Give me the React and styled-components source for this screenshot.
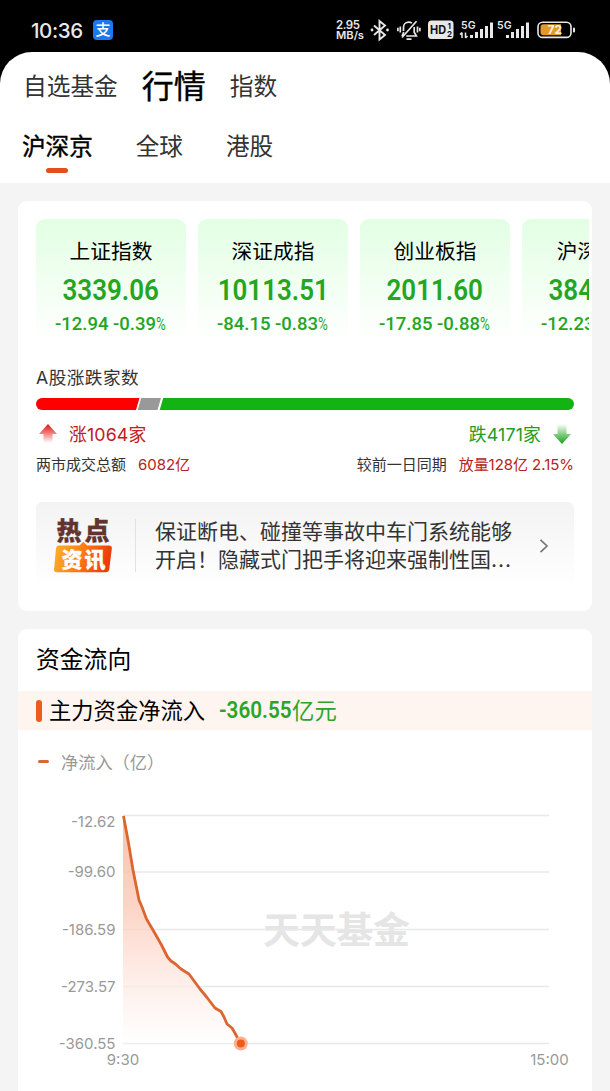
import styled, { createGlobalStyle } from "styled-components";

const indexList = [
  { name: "上证指数", value: "3339.06", change: "-12.94", rate: "-0.39" },
  { name: "深证成指", value: "10113.51", change: "-84.15", rate: "-0.83" },
  { name: "创业板指", value: "2011.60", change: "-17.85", rate: "-0.88" },
  { name: "沪深300", value: "3846.23", change: "-12.23", rate: "-0.32" },
];

const gridLines = [
  { y: 25.5, label: "-12.62" },
  { y: 82, label: "-99.60" },
  { y: 139.5, label: "-186.59" },
  { y: 196.5, label: "-273.57" },
  { y: 253.5, label: "-360.55" },
];

const flowPoints =
  "105.5,26 110.5,53 115,80 121,110 124,117 128.5,129 137,143.5 143.5,155 149.5,167 153,171 157.5,174 163,179 171,184 182,199 189,207.5 197,218 203,221.5 206,227 209,234 214,238 218,245 222.5,253.5";

const StatusIcons = () => {
  return (
    <svg width="242" height="24" viewBox="0 0 242 24" fill="none">
      <g fill="#e8e8e8" fontFamily="Inter, sans-serif" fontWeight="600">
        <text x="0" y="11" fontSize="11.5" textLength="24">2.95</text>
        <text x="0" y="20.5" fontSize="10.5" textLength="28" lengthAdjust="spacingAndGlyphs">MB/s</text>
      </g>
      {/* bluetooth */}
      <path d="M38 7.5l11 9.5-5.500 4.500V3l5.500 4.500-11 9.500" stroke="#e8e8e8" strokeWidth="1.9" />
      <circle cx="36" cy="12" r="1.4" fill="#e8e8e8" />
      <circle cx="51.5" cy="12" r="1.4" fill="#e8e8e8" />
      {/* muted bell */}
      <path
        d="M67.5 13V9.200c0-3 2.300-5 5.300-5 1.200 0 2.200.3 3.100.9M78.200 9v5.200l2.200 3.800H70.200M67.800 14L66 18M66 19.500L80.500 3.200M70.500 21.200h5M64.300 8.500v6M61.900 9.800v3.400M81.500 8.500v6M83.900 9.800v3.400"
        stroke="#e8e8e8"
        strokeWidth="1.7"
      />
      {/* HD */}
      <rect x="92" y="2.5" width="25.5" height="18.5" rx="3.5" fill="#e8e8e8" />
      <g fill="#111" fontFamily="Inter, sans-serif" fontWeight="700">
        <text x="94" y="16.2" fontSize="12" textLength="16" lengthAdjust="spacingAndGlyphs">HD</text>
        <text x="111.5" y="11" fontSize="8">1</text>
        <text x="111" y="19.3" fontSize="8">2</text>
      </g>
      {/* signals */}
      <g fill="#e8e8e8" fontFamily="Inter, sans-serif" fontWeight="600" fontSize="10.5">
        <text x="125" y="10.800" textLength="14.5">5G</text>
        <text x="161" y="10.800" textLength="14.5">5G</text>
      </g>
      <path d="M126 14.500v5.500M124 16.500l2-2M129.500 14.500v5.500M129.500 20l2-2" stroke="#e8e8e8" strokeWidth="1.5" />
      <g fill="#e8e8e8">
        <rect x="134" y="17" width="3" height="3" />
        <rect x="139" y="14" width="3" height="6" />
        <rect x="144" y="11" width="3" height="9" />
        <rect x="149" y="8" width="3" height="12" />
        <rect x="154" y="4.5" width="3" height="15.5" />
        <rect x="170" y="17" width="3" height="3" />
        <rect x="175" y="14" width="3" height="6" />
        <rect x="180" y="11" width="3" height="9" />
        <rect x="185" y="8" width="3" height="12" />
        <rect x="190" y="4.5" width="3" height="15.5" />
      </g>
      {/* battery */}
      <rect x="202" y="4.2" width="33" height="15.2" rx="4.5" stroke="#e8e8e8" strokeWidth="1.6" />
      <path d="M207.500 6.300H225v11h-17.500a3 3 0 01-3-3v-5a3 3 0 013-3z" fill="#e09a28" />
      <rect x="237" y="9.5" width="2" height="5" rx="1" fill="#e8e8e8" />
      <text x="211.5" y="16" fontSize="12" fontWeight="700" fill="#fbf3e4" fontFamily="Inter, sans-serif" textLength="14.5" lengthAdjust="spacingAndGlyphs">
        72
      </text>
    </svg>
  );
};

const FlowChart = () => {
  return (
    <svg width="574" height="301" viewBox="0 0 574 301">
      <defs>
        <linearGradient id="flowArea" x1="0" y1="0" x2="0" y2="1">
          <stop offset="0" stopColor="#f8b49a" stopOpacity="0.85" />
          <stop offset="0.4" stopColor="#fbcab8" stopOpacity="0.8" />
          <stop offset="1" stopColor="#fff" stopOpacity="0.6" />
        </linearGradient>
      </defs>
      <ChartMark x="245" y="154" textLength="147">
        天天基金
      </ChartMark>
      {gridLines.map((line) => (
        <g key={line.label}>
          <line x1="105" x2="531" y1={line.y} y2={line.y} stroke="#e8e8e8" strokeWidth="1.3" />
          <AxisText x="97.5" y={line.label === "-12.62" ? 37 : line.y + 5.2} textAnchor="end">
            {line.label}
          </AxisText>
        </g>
      ))}
      <polygon points={`105,253.5 105,26 ${flowPoints}`} fill="url(#flowArea)" />
      <polyline points={flowPoints} fill="none" stroke="#dc6530" strokeWidth="2.8" strokeLinejoin="round" />
      <circle cx="222.8" cy="253.5" r="7" fill="#fbb092" />
      <circle cx="222.8" cy="253.5" r="4" fill="#f15a1d" />
      <AxisText x="105" y="275" textAnchor="middle">
        9:30
      </AxisText>
      <AxisText x="531.5" y="275" textAnchor="middle">
        15:00
      </AxisText>
    </svg>
  );
};

const NewsBadge = () => {
  return (
    <svg width="58" height="58" viewBox="0 0 58 58">
      <defs>
        <linearGradient id="badgeFill" x1="0" y1="0" x2="1" y2="0.2">
          <stop offset="0" stopColor="#fdb52d" />
          <stop offset="0.55" stopColor="#fb7a17" />
          <stop offset="1" stopColor="#ee3d0b" />
        </linearGradient>
      </defs>
      <BadgeText x="2.5" y="22.5" textLength="53" fill="#633330" stroke="#633330" fontSize="25">
        热点
      </BadgeText>
      <path
        d="M5 28.500h20.500l3.800-3.800 3.800 3.800H55q3.200 0 2.800 3.200l-2.500 20.500q-.5 3-3.500 3H2.800q-3.200 0-2.700-3.200L2 31.500q.4-3 3-3z"
        fill="url(#badgeFill)"
      />
      <BadgeText x="7.5" y="49.5" textLength="44" fill="#fff" stroke="#fff" fontSize="21">
        资讯
      </BadgeText>
    </svg>
  );
};

const App = () => {
  return (
    <>
      <GlobalStyle />
      <StPage>
        <StStatusBar>
          <StClock>10:36</StClock>
          <StPayIcon>支</StPayIcon>
          <StatusIcons />
        </StStatusBar>

        <StHeader>
          <StMainNav>
            <NavItem>自选基金</NavItem>
            <NavItem $active>行情</NavItem>
            <NavItem>指数</NavItem>
          </StMainNav>
          <StTabs>
            <Tab $active>沪深京</Tab>
            <Tab>全球</Tab>
            <Tab>港股</Tab>
          </StTabs>
        </StHeader>

        <StContent>
          <MarketCard>
            <IndexRow>
              {indexList.map((item) => (
                <IndexTile key={item.name}>
                  <IndexName>{item.name}</IndexName>
                  <IndexValue>{item.value}</IndexValue>
                  <IndexChange>
                    {item.change} {item.rate}
                    <Percent>%</Percent>
                  </IndexChange>
                </IndexTile>
              ))}
            </IndexRow>

            <BreadthTitle>A股涨跌家数</BreadthTitle>
            <svg width="538" height="12" viewBox="0 0 538 12">
              <path d="M6 0h97.500l-3.500 12H6A6 6 0 016 0z" fill="#fe0000" />
              <path d="M105.200 0h19.800l-3.500 12h-19.800z" fill="#999" />
              <path d="M127.200 0H532a6 6 0 010 12H123.700z" fill="#14b314" />
            </svg>
            <CountRow>
              <CountText $color="#c02020">
                <svg width="18" height="20" viewBox="0 0 18 20">
                  <defs>
                    <linearGradient id="upArrow" x1="0" y1="0" x2="0" y2="1">
                      <stop offset="0" stopColor="#d81515" />
                      <stop offset="0.5" stopColor="#f58080" />
                      <stop offset="1" stopColor="#fff" />
                    </linearGradient>
                  </defs>
                  <path d="M9 0l9 10h-4.500v9h-9v-9H0z" fill="url(#upArrow)" />
                </svg>
                涨1064家
              </CountText>
              <CountText $color="#249c24">
                跌4171家
                <svg width="18" height="20" viewBox="0 0 18 20">
                  <defs>
                    <linearGradient id="downArrow" x1="0" y1="0" x2="0" y2="1">
                      <stop offset="0" stopColor="#fff" />
                      <stop offset="0.5" stopColor="#84cf84" />
                      <stop offset="1" stopColor="#18a018" />
                    </linearGradient>
                  </defs>
                  <path d="M4.500 0h9v10H18l-9 10-9-10h4.500z" fill="url(#downArrow)" />
                </svg>
              </CountText>
            </CountRow>
            <TurnoverRow>
              <span>
                两市成交总额<Turnover>6082亿</Turnover>
              </span>
              <span>
                较前一日同期<Turnover>放量128亿 2.15%</Turnover>
              </span>
            </TurnoverRow>

            <NewsBox>
              <NewsBadge />
              <NewsDivider />
              <NewsText>
                保证断电、碰撞等事故中车门系统能够
                <br />
                开启！隐藏式门把手将迎来强制性国<Dots>...</Dots>
              </NewsText>
              <svg width="10" height="16" viewBox="0 0 10 16" fill="none">
                <path d="M1.500 1.800L8 8l-6.500 6.200" stroke="#777" strokeWidth="1.7" />
              </svg>
            </NewsBox>
          </MarketCard>

          <FlowCard>
            <FlowTitle>资金流向</FlowTitle>
            <FlowSummary>
              <FlowMark />
              主力资金净流入
              <FlowValue>-360.55</FlowValue>
              <FlowUnit>亿元</FlowUnit>
            </FlowSummary>
            <Legend>
              <LegendDash />
              净流入（亿）
            </Legend>
            <FlowChart />
          </FlowCard>
        </StContent>
      </StPage>
    </>
  );
};

export default App;

const GlobalStyle = createGlobalStyle`
  * {
    box-sizing: border-box;
  }

  body {
    margin: 0;
    background: #000;
    font-family: Inter, "Noto Sans CJK SC", sans-serif;
    overflow: hidden;
  }

  svg {
    display: block;
    flex-shrink: 0;
  }
`;

const StPage = styled.div`
  width: 610px;
  height: 1091px;
  overflow: hidden;
  background: #000;
`;

const StStatusBar = styled.div`
  height: 52px;
  padding: 8px 32px 0 31px;
  display: flex;
  align-items: center;

  > svg {
    margin-left: auto;
  }
`;

const StClock = styled.span`
  width: 52px;
  font-size: 20.5px;
  font-weight: 500;
  letter-spacing: -0.4px;
  color: #e8e8e8;
`;

const StPayIcon = styled.span`
  width: 20px;
  height: 20px;
  margin-left: 10px;
  border-radius: 4px;
  background: #1c78f0;
  color: #fff;
  font-size: 15px;
  font-weight: 500;
  line-height: 19px;
  text-align: center;
`;

const StHeader = styled.header`
  height: 131px;
  border-radius: 32px 32px 0 0;
  background: #fff;
`;

const StMainNav = styled.nav`
  height: 67px;
  padding: 2px 0 0 23px;
  display: flex;
  align-items: center;
  gap: 24px;
`;

const NavItem = styled.span`
  font-size: ${(props) => (props.$active ? "32px" : "23.7px")};
  line-height: 40px;
  color: ${(props) => (props.$active ? "#000" : "#333")};
  -webkit-text-stroke: ${(props) => (props.$active ? "0.4px #000" : "0")};
`;

const StTabs = styled.div`
  padding-left: 22px;
  display: flex;
  gap: 43px;
`;

const Tab = styled.span`
  height: 56px;
  font-size: 23.6px;
  line-height: 55px;
  color: ${(props) => (props.$active ? "#000" : "#333")};
  -webkit-text-stroke: ${(props) => (props.$active ? "0.4px #000" : "0")};

  &::after {
    content: "";
    display: ${(props) => (props.$active ? "block" : "none")};
    width: 22px;
    height: 5px;
    margin: -6px auto 0;
    border-radius: 3px;
    background: #e1501a;
  }
`;

const StContent = styled.main`
  height: 908px;
  padding: 18px 18px 0;
  display: flex;
  flex-direction: column;
  gap: 18px;
  background: #f4f4f4;
`;

const Card = styled.section`
  flex-shrink: 0;
  border-radius: 9px;
  background: #fff;
`;

const MarketCard = styled(Card)`
  height: 410px;
  padding: 18px 18px 0;
`;

const IndexRow = styled.div`
  width: 553px;
  height: 122px;
  display: flex;
  gap: 12px;
  overflow: hidden;
`;

const IndexTile = styled.div`
  flex: 0 0 150px;
  padding-top: 19px;
  display: flex;
  flex-direction: column;
  align-items: center;
  border-radius: 9px;
  background: linear-gradient(#e2ffe3, #fff);
  white-space: nowrap;
`;

const IndexName = styled.div`
  font-size: 20.7px;
  line-height: 28px;
  color: #000;
`;

const IndexValue = styled.div`
  margin-top: 6px;
  font-family: Roboto, sans-serif;
  font-size: 30px;
  font-weight: 600;
  line-height: 36px;
  color: #24a524;
  transform: scaleX(0.865);
`;

const IndexChange = styled.div`
  margin-top: 4px;
  font-family: Roboto, sans-serif;
  font-size: 18.5px;
  font-weight: 500;
  line-height: 24px;
  color: #24a524;
`;

const Percent = styled.span`
  display: inline-block;
  width: 11px;
  font-weight: 400;
  transform: scaleX(0.72);
  transform-origin: left;
`;

const BreadthTitle = styled.h3`
  margin: 26px 0 9px;
  font-size: 17.6px;
  font-weight: 400;
  line-height: 22px;
  letter-spacing: 0.5px;
  color: #333;
`;

const CountRow = styled.div`
  height: 24px;
  margin-top: 13px;
  padding: 0 3px;
  display: flex;
  justify-content: space-between;
`;

const CountText = styled.span`
  display: flex;
  align-items: center;
  gap: 12px;
  font-size: 17.8px;
  line-height: 24px;
  letter-spacing: 0.15px;
  color: ${(props) => props.$color};

  svg {
    margin-top: -2px;
  }
`;

const TurnoverRow = styled.div`
  height: 24px;
  margin-top: 5px;
  display: flex;
  justify-content: space-between;
  font-size: 15px;
  line-height: 25px;
  color: #333;
`;

const Turnover = styled.span`
  margin-left: 12px;
  letter-spacing: -0.05px;
  color: #b82222;
`;

const NewsBox = styled.div`
  height: 87px;
  margin-top: 26px;
  padding: 0 25px 0 18px;
  display: flex;
  align-items: center;
  border-radius: 6px;
  background: linear-gradient(#f3f3f3, #fff);
`;

const NewsDivider = styled.div`
  width: 1px;
  height: 53px;
  margin: 0 19px 0 23px;
  background: #e2e2e2;
`;

const NewsText = styled.p`
  width: 384px;
  margin: 0;
  padding-top: 1px;
  font-size: 21px;
  line-height: 28px;
  color: #333;
  white-space: nowrap;
`;

const Dots = styled.span`
  letter-spacing: 1px;
`;

const FlowCard = styled(Card)`
  height: 480px;
`;

const FlowTitle = styled.h2`
  height: 62px;
  margin: 0;
  padding-left: 18px;
  font-size: 23.8px;
  font-weight: 400;
  line-height: 62px;
  color: #000;
`;

const FlowSummary = styled.div`
  height: 39px;
  padding-left: 18px;
  display: flex;
  align-items: center;
  background: #fff5f0;
  font-size: 22.3px;
  line-height: 39px;
  color: #000;
`;

const FlowMark = styled.i`
  width: 6px;
  height: 22px;
  margin-right: 7px;
  border-radius: 3px;
  background: #ed5c1c;
`;

const FlowValue = styled.span`
  width: 73px;
  margin-left: 14px;
  font-family: Roboto, sans-serif;
  font-size: 23px;
  font-weight: 600;
  color: #2aa52a;
  transform: scaleX(0.9);
  transform-origin: left;
`;

const FlowUnit = styled.span`
  color: #2aa52a;
`;

const Legend = styled.div`
  height: 60px;
  padding: 3px 0 0 20px;
  display: flex;
  align-items: center;
  gap: 12px;
  font-size: 17.2px;
  color: #999;
`;

const LegendDash = styled.i`
  width: 11px;
  height: 3px;
  border-radius: 2px;
  background: #dc6530;
`;

const AxisText = styled.text`
  font-family: Inter, sans-serif;
  font-size: 15px;
  fill: #999;
`;

const ChartMark = styled.text`
  font-family: "Noto Sans CJK SC", sans-serif;
  font-size: 37px;
  font-weight: 700;
  fill: #e5e5e5;
`;

const BadgeText = styled.text`
  font-family: "Noto Sans CJK SC", sans-serif;
  font-weight: 900;
  stroke-width: 0.3px;
`;
